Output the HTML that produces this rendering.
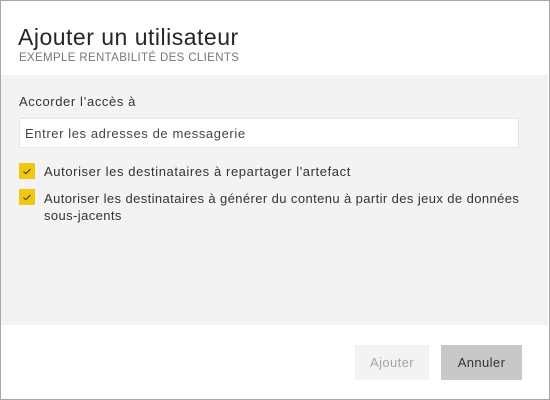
<!DOCTYPE html><html><head><style>
*{margin:0;padding:0;box-sizing:border-box}
body{width:550px;height:400px;background:#fff;font-family:"Liberation Sans",sans-serif;position:relative;overflow:hidden}
.frame{position:absolute;left:0;top:0;width:550px;height:400px;border:1px solid #a8a8a8}
.gray{position:absolute;left:1px;top:75px;width:547px;height:250px;background:#f3f3f3}
.t{position:absolute;white-space:nowrap;color:#333}
.s{font-size:13px;letter-spacing:0.6px}
.cb{position:absolute;left:19px;width:16px;height:16px;background:#f2c811}
.cb svg{position:absolute;left:0;top:0}
.btn{position:absolute;top:345px;height:35px;font-size:13px;text-align:center;line-height:35px;letter-spacing:0.4px}
</style></head><body>
<div class="frame"></div>
<div class="gray"></div>
<div class="t" style="left:18px;top:24px;font-size:23px;color:#252525;letter-spacing:0.5px">Ajouter un utilisateur</div>
<div class="t" style="left:19px;top:52px;font-size:11.5px;color:#777;letter-spacing:0.35px">EXEMPLE RENTABILITÉ DES CLIENTS</div>
<div class="t s" style="left:19px;top:94px">Accorder l’accès à</div>
<div style="position:absolute;left:19px;top:118px;width:500px;height:30px;background:#fff;border:1px solid #e6e6e6"></div>
<div class="t s" style="left:25px;top:126px;color:#444">Entrer les adresses de messagerie</div>
<div class="cb" style="top:163px"><svg width="16" height="16"><path d="M4.5 8.5l2.3 2.2 4.7-4.7" stroke="#333" stroke-width="1" fill="none"/></svg></div>
<div class="t s" style="left:44px;top:164px">Autoriser les destinataires à repartager l'artefact</div>
<div class="cb" style="top:189px"><svg width="16" height="16"><path d="M4.5 8.5l2.3 2.2 4.7-4.7" stroke="#333" stroke-width="1" fill="none"/></svg></div>
<div class="t s" style="left:44px;top:190px;line-height:17px;letter-spacing:0.4px">Autoriser les destinataires à générer du contenu à partir des jeux de données<br>sous-jacents</div>
<div class="btn" style="left:355px;width:74px;background:#f3f3f3;color:#a6a6a6">Ajouter</div>
<div class="btn" style="left:441px;width:81px;background:#c8c8c8;color:#333">Annuler</div>
</body></html>
